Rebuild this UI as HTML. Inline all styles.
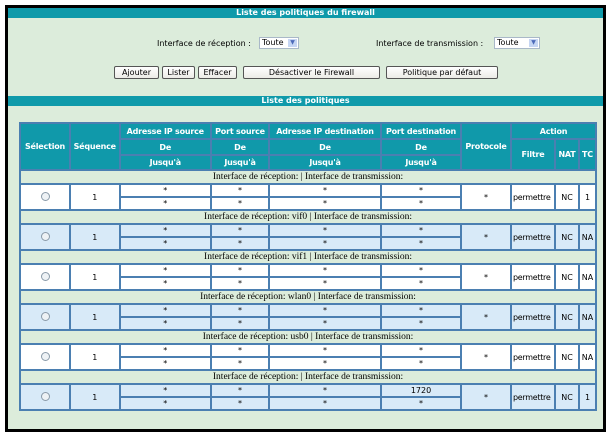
<!DOCTYPE html>
<html><head><meta charset="utf-8"><style>
*{margin:0;padding:0;box-sizing:border-box}
body{width:610px;height:437px;background:#fff;position:relative;overflow:hidden;font-family:"DejaVu Sans","Liberation Sans",sans-serif}
#frame{position:absolute;left:5px;top:5px;width:601px;height:427px;border:3px solid #000;background:#dcecdb}
.bar{position:absolute;left:0;right:0;height:10px;background:#0f9aaa;color:#fff;font-weight:bold;font-size:8px;line-height:10px;text-align:center}
.lbl{position:absolute;font-size:8px;color:#000;line-height:12px}
.sel{position:absolute;height:12px;background:#fff;border:1px solid #a9b8c8;font-size:8px;line-height:10px;padding-left:2px}
.sel i{position:absolute;right:1px;top:1px;width:9px;height:8px;background:#c6d6f3;color:#4d6bb9;font-size:6px;line-height:8px;text-align:center;font-style:normal}
.btn{position:absolute;top:58px;height:13px;border:1px solid #555;border-radius:2px;background:linear-gradient(#fff,#ecebe6);font-size:8px;line-height:11px;text-align:center}
table{position:absolute;left:11px;top:114px;width:576px;border-collapse:collapse;table-layout:fixed}
td,th{border:2px solid #4b7fb1;text-align:center;font-size:8px;padding:0;overflow:hidden;white-space:nowrap}
th{background:#1099aa;color:#fff;font-weight:bold;font-size:8px;letter-spacing:-0.2px}
td.if{background:#dcecdb;font-family:"Liberation Serif",serif;font-size:9.5px;height:14px;line-height:10px}
tr.w td{background:#fff}
tr.b td{background:#d8eaf8}
tr.w td.if,tr.b td.if{background:#dcecdb}
td.h{height:13px;line-height:9px;font-size:8px}
td.p{font-size:8px;letter-spacing:-0.3px;text-align:left;padding-left:1px}
.r{display:inline-block;width:9px;height:9px;border:1px solid #8a9aa8;border-radius:50%;background:#eef2f5}
</style></head><body>
<div id="frame">
<div class="bar" style="top:0">Liste des politiques du firewall</div>
<div class="lbl" style="left:149px;top:30px">Interface de réception :</div>
<div class="sel" style="left:251px;top:29px;width:40px">Toute<i>▼</i></div>
<div class="lbl" style="left:368px;top:30px">Interface de transmission :</div>
<div class="sel" style="left:486px;top:29px;width:46px">Toute<i>▼</i></div>
<div class="btn" style="left:106px;width:45px">Ajouter</div>
<div class="btn" style="left:154px;width:33px">Lister</div>
<div class="btn" style="left:190px;width:39px">Effacer</div>
<div class="btn" style="left:235px;width:137px">Désactiver le Firewall</div>
<div class="btn" style="left:378px;width:112px">Politique par défaut</div>
<div class="bar" style="top:88px">Liste des politiques</div>
<table>
<colgroup><col style="width:50px"><col style="width:49.5px"><col style="width:91.5px"><col style="width:58px"><col style="width:112px"><col style="width:80px"><col style="width:50px"><col style="width:44px"><col style="width:24px"><col style="width:17px"></colgroup>
<tr style="height:16px"><th rowspan="3">Sélection</th><th rowspan="3">Séquence</th><th>Adresse IP source</th><th>Port source</th><th>Adresse IP destination</th><th>Port destination</th><th rowspan="3">Protocole</th><th colspan="3">Action</th></tr>
<tr style="height:16px"><th>De</th><th>De</th><th>De</th><th>De</th><th rowspan="2">Filtre</th><th rowspan="2">NAT</th><th rowspan="2">TC</th></tr>
<tr style="height:15px"><th>Jusqu'à</th><th>Jusqu'à</th><th>Jusqu'à</th><th>Jusqu'à</th></tr>
<tr><td class="if" colspan="10">Interface de réception: | Interface de transmission:</td></tr>
<tr class="w"><td rowspan="2"><span class="r"></span></td><td rowspan="2">1</td><td class="h">*</td><td class="h">*</td><td class="h">*</td><td class="h">*</td><td rowspan="2">*</td><td rowspan="2" class="p">permettre</td><td rowspan="2">NC</td><td rowspan="2">1</td></tr>
<tr class="w"><td class="h">*</td><td class="h">*</td><td class="h">*</td><td class="h">*</td></tr>
<tr><td class="if" colspan="10">Interface de réception: vif0 | Interface de transmission:</td></tr>
<tr class="b"><td rowspan="2"><span class="r"></span></td><td rowspan="2">1</td><td class="h">*</td><td class="h">*</td><td class="h">*</td><td class="h">*</td><td rowspan="2">*</td><td rowspan="2" class="p">permettre</td><td rowspan="2">NC</td><td rowspan="2">NA</td></tr>
<tr class="b"><td class="h">*</td><td class="h">*</td><td class="h">*</td><td class="h">*</td></tr>
<tr><td class="if" colspan="10">Interface de réception: vif1 | Interface de transmission:</td></tr>
<tr class="w"><td rowspan="2"><span class="r"></span></td><td rowspan="2">1</td><td class="h">*</td><td class="h">*</td><td class="h">*</td><td class="h">*</td><td rowspan="2">*</td><td rowspan="2" class="p">permettre</td><td rowspan="2">NC</td><td rowspan="2">NA</td></tr>
<tr class="w"><td class="h">*</td><td class="h">*</td><td class="h">*</td><td class="h">*</td></tr>
<tr><td class="if" colspan="10">Interface de réception: wlan0 | Interface de transmission:</td></tr>
<tr class="b"><td rowspan="2"><span class="r"></span></td><td rowspan="2">1</td><td class="h">*</td><td class="h">*</td><td class="h">*</td><td class="h">*</td><td rowspan="2">*</td><td rowspan="2" class="p">permettre</td><td rowspan="2">NC</td><td rowspan="2">NA</td></tr>
<tr class="b"><td class="h">*</td><td class="h">*</td><td class="h">*</td><td class="h">*</td></tr>
<tr><td class="if" colspan="10">Interface de réception: usb0 | Interface de transmission:</td></tr>
<tr class="w"><td rowspan="2"><span class="r"></span></td><td rowspan="2">1</td><td class="h">*</td><td class="h">*</td><td class="h">*</td><td class="h">*</td><td rowspan="2">*</td><td rowspan="2" class="p">permettre</td><td rowspan="2">NC</td><td rowspan="2">NA</td></tr>
<tr class="w"><td class="h">*</td><td class="h">*</td><td class="h">*</td><td class="h">*</td></tr>
<tr><td class="if" colspan="10">Interface de réception: | Interface de transmission:</td></tr>
<tr class="b"><td rowspan="2"><span class="r"></span></td><td rowspan="2">1</td><td class="h">*</td><td class="h">*</td><td class="h">*</td><td class="h">1720</td><td rowspan="2">*</td><td rowspan="2" class="p">permettre</td><td rowspan="2">NC</td><td rowspan="2">1</td></tr>
<tr class="b"><td class="h">*</td><td class="h">*</td><td class="h">*</td><td class="h">*</td></tr>
</table>
</div>
</body></html>
